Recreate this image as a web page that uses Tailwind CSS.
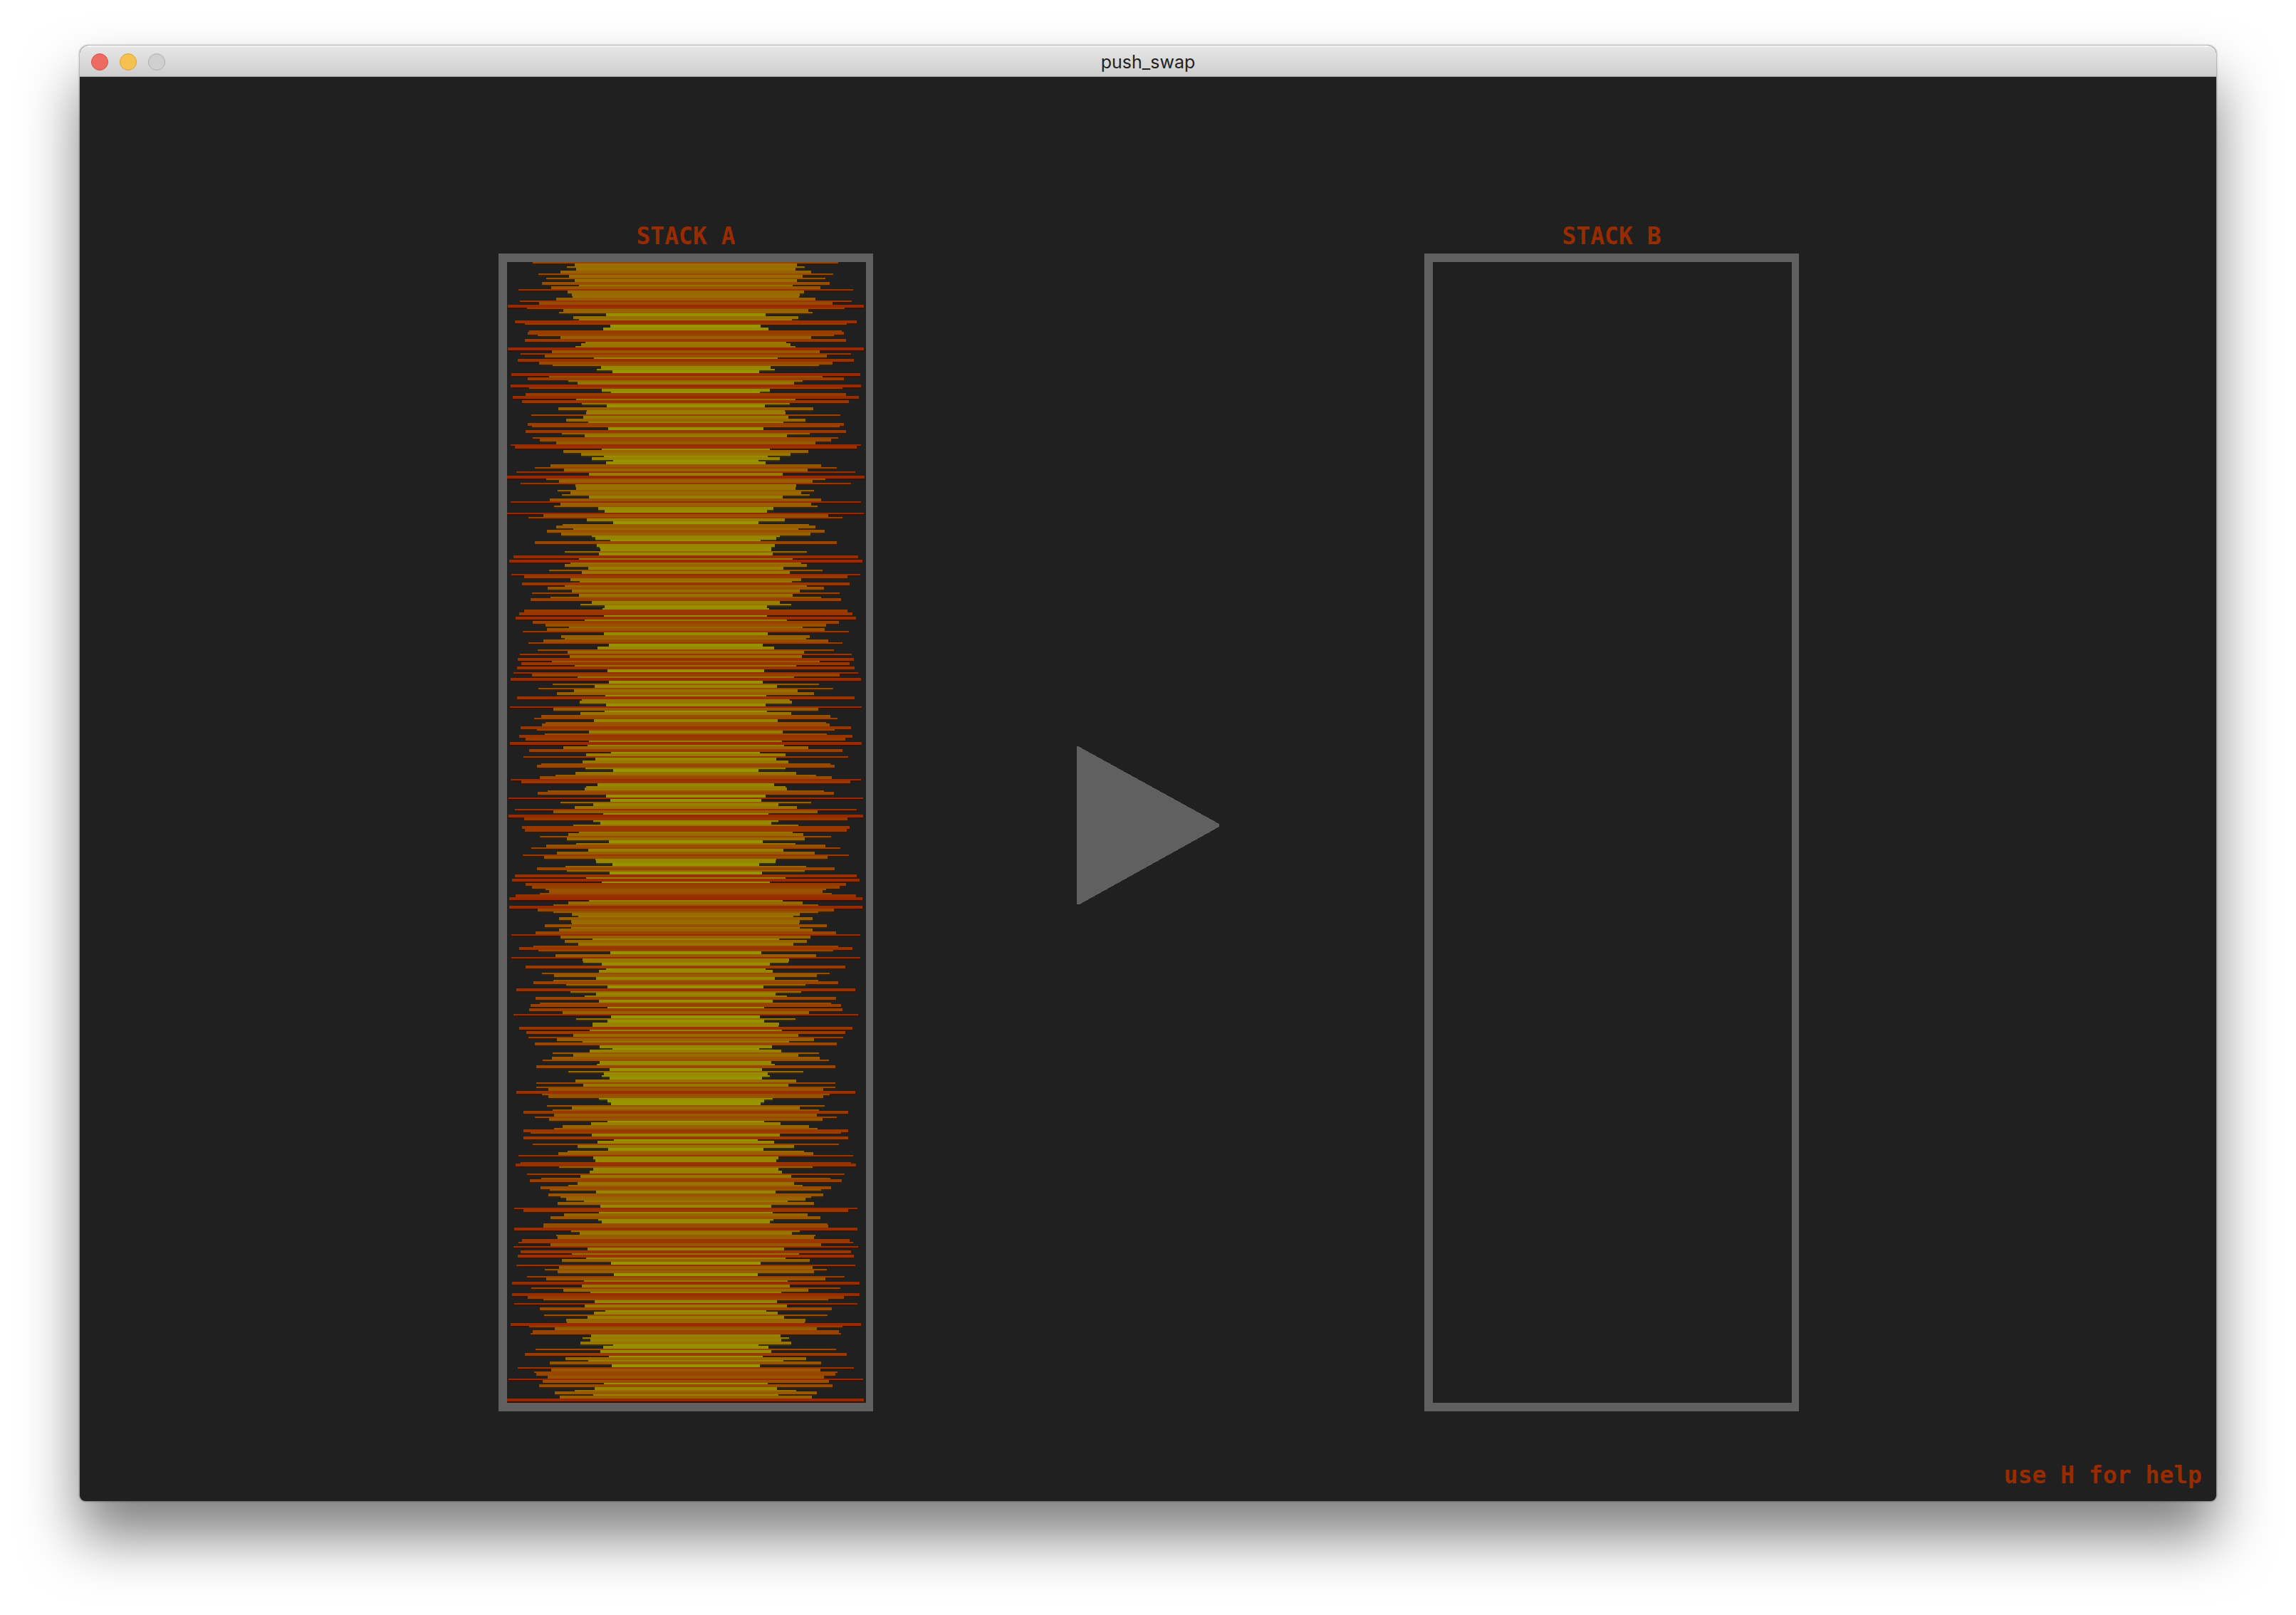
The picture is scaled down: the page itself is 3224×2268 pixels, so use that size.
<!DOCTYPE html>
<html lang="en">
<head>
<meta charset="utf-8">
<meta name="viewport" content="width=device-width, initial-scale=1">
<title>push_swap</title>
<script src="https://cdn.jsdelivr.net/npm/@tailwindcss/browser@4"></script>
</head>
<body class="bg-white px-28 pt-16 pb-40">
<div class="overflow-hidden rounded-t-xl rounded-b-lg bg-[#202020] shadow-[0_0_2px_1px_rgba(0,0,0,0.3),0_50px_80px_rgba(0,0,0,0.5)]">
  <header class="grid h-11 grid-cols-3 items-center border-t-2 border-b border-t-[#f4f4f4] border-b-[#a9a9a9] bg-linear-to-b from-[#e6e6e6] to-[#cecece] px-4">
    <div class="flex gap-4">
      <button type="button" aria-label="Close" class="size-6 rounded-full border border-[#d8504a] bg-[#ed6b60]"></button>
      <button type="button" aria-label="Minimize" class="size-6 rounded-full border border-[#dba03a] bg-[#f5c151]"></button>
      <button type="button" aria-label="Zoom" disabled class="size-6 rounded-full border border-[#adadad] bg-[#cfcfcf]"></button>
    </div>
    <h1 class="text-center font-['Inter',sans-serif] text-[25px] leading-8 text-[#222222]">push_swap</h1>
  </header>

  <main class="font-['DejaVu_Sans_Mono',monospace] text-[33px] leading-10 font-bold text-[#982c00]">
    <div class="grid grid-cols-[588fr_526fr_286fr_200fr_288fr_526fr_586fr] items-center pt-[204px]">
      <section class="col-start-2">
        <h2 class="mb-1 text-center">STACK A</h2>
        <div class="aspect-[526/1626] border-y-12 border-r-10 border-l-12 border-[#606060]">
          <svg id="stack-a" class="block size-full" viewBox="90 0 1411 801" preserveAspectRatio="none" shape-rendering="crispEdges" role="img" aria-label="Stack A values"></svg>
        </div>
      </section>
      <button type="button" aria-label="Play" class="col-start-4 pt-6">
        <svg class="block w-full" viewBox="0 0 200 222" shape-rendering="crispEdges" aria-hidden="true"><path d="M0 0L2 0L200 109V113L4 222H0Z" fill="#606060"/></svg>
      </button>
      <section class="col-start-6">
        <h2 class="mb-1 text-center">STACK B</h2>
        <div class="aspect-[526/1626] border-y-12 border-r-10 border-l-12 border-[#606060]"></div>
      </section>
    </div>
    <p class="pt-[70px] pr-5 pb-4 text-right">use H for help</p>
  </main>
</div>

<script>
// Left edge of every bar, top of the stack first; bars are mirrored around the centre.
const bars = [
192,356,326,362,300, 214,334,244,356,228, 372,264,134,328,345, 348,282,140,216,93,
168,312,294,478,350, 374,120,160,497,468, 178,170,210,300,161, 398,380,360,93,266,
142,238,432,132,216, 268,459,443,503,106, 256,171,332,367,103, 176,463,500,163,112,
361,150,384,482,291, 404,400,186,390,322, 409,171,188,487,162, 306,395,192,220,284,
104,120,462,312,381, 470,423,508,479,260, 198,314,125,412,90, 244,294,142,358,362,
289,339,305,412,259, 104,300,275,448,473, 91,232,175,403,508, 308,283,350,246,303,
422,436,497,198,442, 455,457,316,452,114, 373,98,340,317,409, 256,383,107,158,338,
375,148,317,249,344, 187,372,260,181,423, 377,473,464,157,137, 472,123,396,191,241,
333,247,151,470,304, 318,232,175,489,445, 209,328,140,335,132, 265,147,357,129,484,
114,188,368,104,490, 269,434,214,353,287, 475,129,383,376,478, 101,272,473,378,225,
196,431,241,228,144, 208,411,238,137,164, 413,101,405,311,176, 500,400,153,436,388,
223,207,399,507,359, 280,219,103,146,445, 400,394,249,210,479, 95,495,299,429,355,
121,273,467,96,157, 428,457,351,148,159, 372,330,220,325,489, 362,243,186,409,286,
152,236,438,440,504, 319,207,325,494,120, 401,109,462,162,188, 242,255,219,124,98,
412,332,271,97,209, 271,345,370,293,343, 346,238,343,295,202, 106,301,426,316,370,
193,137,212,495,279, 106,387,389,461,164, 479,451,227,276,441, 271,193,321,486,126,
340,439,394,202,452, 220,181,485,176,307, 115,500,361,485,425, 427,137,414,165,350,
174,287,387,199,453, 505,416,269,350,265, 230,455,443,204,493, 330,470,461,492,358,
204,389,205,253,126, 228,253,452,484,499, 247,345,268,154,276, 198,255,484,420,309,
275,153,181,423,154, 510,445,190,367,487, 328,292,134,429,437, 142,124,294,429,415,
168,378,224,180,367, 332,221,259,439,253, 300,321,392,289,457, 118,155,452,314,262,
447,462,234,232,118, 343,376,283,288,149, 135,261,115,406,143, 346,131,400,305,498,
126,293,238,289,510, 168,243,392,109,383, 186,312,418,109,171, 232,434,118,395,218,
475,432,236,405,322, 326,103,176,277,190, 182,420,387,417,379, 507,467,202,457,160,
490,319,409,259,501, 132,264,197,204,249, 95,230,470,216,434, 357,278,429,296,91
];
const svg = document.getElementById('stack-a');
function addRow(x, y, height, fill) {
  const rect = document.createElementNS('http://www.w3.org/2000/svg', 'rect');
  rect.setAttribute('x', x);
  rect.setAttribute('y', y);
  rect.setAttribute('width', 1585 - 2 * x);
  rect.setAttribute('height', height);
  rect.setAttribute('fill', fill);
  svg.append(rect);
}
bars.forEach((x, i) => {
  // Each bar is 1.6 rows tall: solid rows, then a dim one the next bar may cover.
  const top = Math.floor(i * 8 / 5);
  const bottom = Math.floor((i + 1) * 8 / 5);
  const green = Math.round(40 + (x - 90) / 420 * 112);
  addRow(x, bottom, 1, `rgb(60 ${Math.round(green * 0.4)} 0)`);
  addRow(x, top, bottom - top, `rgb(152 ${green} 0)`);
});
</script>
</body>
</html>
